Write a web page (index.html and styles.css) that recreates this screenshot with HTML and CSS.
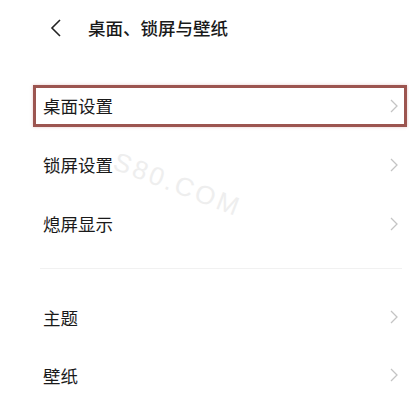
FILE: index.html
```html
<!DOCTYPE html>
<html lang="zh-CN">
<head>
    <meta charset="UTF-8">
    <meta name="viewport" content="width=device-width, initial-scale=1.0">
    <title>桌面、锁屏与壁纸</title>
    <link rel="stylesheet" href="styles.css">
</head>
<body>
    <header class="top-bar">
        <span class="back">
            <svg width="12" height="18" viewBox="0 0 12 18"><polyline points="10,1 2,9 10,17" fill="none" stroke="#222" stroke-width="1.6"/></svg>
        </span>
        <h1>桌面、锁屏与壁纸</h1>
    </header>
    <div class="settings">
        <div class="row marked">
            <span>桌面设置</span>
            <svg class="arrow" width="8" height="14" viewBox="0 0 8 14"><polyline points="1,1 7,7 1,13" fill="none" stroke="#c4c4c4" stroke-width="1.3"/></svg>
        </div>
        <div class="row">
            <span>锁屏设置</span>
            <svg class="arrow" width="8" height="14" viewBox="0 0 8 14"><polyline points="1,1 7,7 1,13" fill="none" stroke="#c4c4c4" stroke-width="1.3"/></svg>
        </div>
        <div class="row">
            <span>熄屏显示</span>
            <svg class="arrow" width="8" height="14" viewBox="0 0 8 14"><polyline points="1,1 7,7 1,13" fill="none" stroke="#c4c4c4" stroke-width="1.3"/></svg>
        </div>
        <div class="divider"></div>
        <div class="row short">
            <span>主题</span>
            <svg class="arrow" width="8" height="14" viewBox="0 0 8 14"><polyline points="1,1 7,7 1,13" fill="none" stroke="#c4c4c4" stroke-width="1.3"/></svg>
        </div>
        <div class="row short">
            <span>壁纸</span>
            <svg class="arrow" width="8" height="14" viewBox="0 0 8 14"><polyline points="1,1 7,7 1,13" fill="none" stroke="#c4c4c4" stroke-width="1.3"/></svg>
        </div>
    </div>
    <div class="watermark">S80.COM</div>
</body>
</html>
```

FILE: styles.css
```css
body {
    margin: 0;
    padding: 0;
    background-color: #fff;
    font-family: "Noto Sans CJK SC", "Noto Sans", sans-serif;
    color: #1a1a1a;
    position: relative;
    overflow: hidden;
}
.top-bar {
    height: 56px;
    display: flex;
    align-items: center;
    padding-left: 50px;
}
.back {
    display: flex;
    width: 38px;
}
.top-bar h1 {
    margin: 0;
    font-size: 17.5px;
    font-weight: 500;
    line-height: 1;
}
.settings {
    padding: 20px 2px 0 33px;
}
.row {
    height: 59px;
    display: flex;
    align-items: center;
    justify-content: space-between;
    padding: 0 9px 0 10px;
    font-size: 17.5px;
    position: relative;
    z-index: 1;
}
.row.short {
    height: 58px;
}
.row span {
    background-color: #fff;
}
.marked::after {
    content: "";
    position: absolute;
    left: 0;
    right: 0;
    top: 9px;
    bottom: 8px;
    border: 3px solid #9c5550;
    box-shadow: 0 0 3px rgba(200, 120, 120, 0.4);
}
.divider {
    height: 1px;
    background-color: #f1f1f1;
    margin: 15px 5px 19px 7px;
}
.watermark {
    position: absolute;
    left: 120px;
    top: 146px;
    font-family: "Liberation Sans", sans-serif;
    font-size: 26px;
    letter-spacing: 3px;
    color: #eeeeee;
    transform: rotate(21deg);
    transform-origin: left top;
}
```
